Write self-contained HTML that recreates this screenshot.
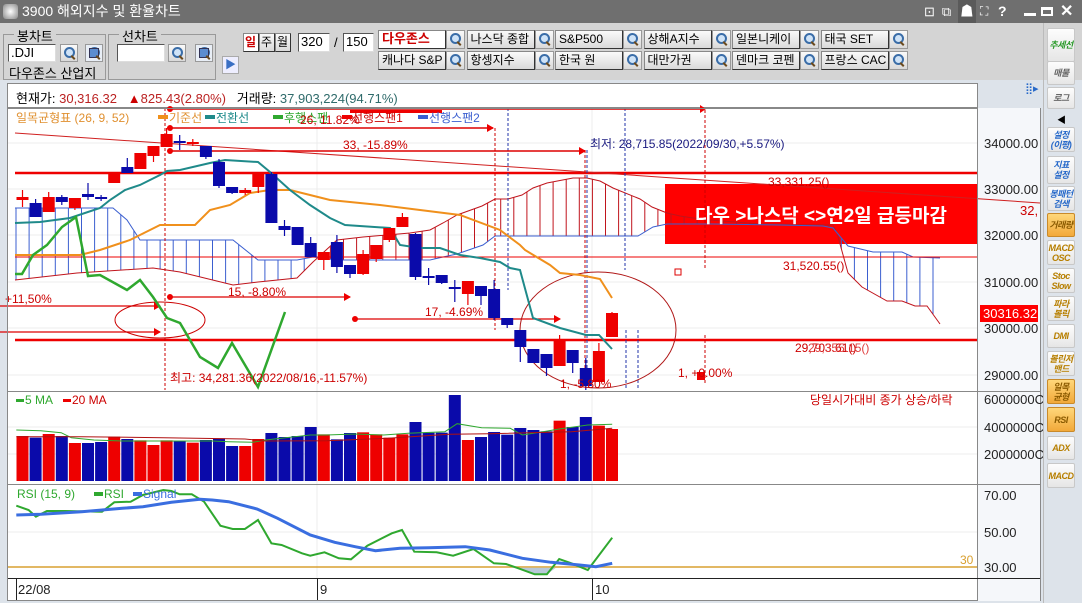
<!DOCTYPE html>
<html><head><meta charset="utf-8">
<style>
*{margin:0;padding:0;box-sizing:border-box}
body{width:1082px;height:603px;overflow:hidden;background:#dde3ea;font-family:"Liberation Sans","Noto Sans CJK KR",sans-serif;font-size:12px;position:relative}
.abs{position:absolute}
#title{left:0;top:0;width:1082px;height:23px;background:#6f6f6f;color:#fff;font-size:14px;line-height:23px}
#tb{left:0;top:23px;width:1082px;height:57px;background:#d4d4d4}
.grp{position:absolute;border:1px solid #999;border-top:none}
.grp span{position:absolute;top:-9px;left:10px;background:#d4d4d4;padding:0 3px;font-size:13px}
.inp{position:absolute;background:#fff;border:1px solid #555;border-right-color:#ddd;border-bottom-color:#ddd;font-size:13px;padding-left:2px;line-height:16px}
.btn{position:absolute;background:linear-gradient(#fafafa,#d9d9d9);border:1px solid #888;border-right-color:#333;border-bottom-color:#333;font-size:12px;line-height:16px;padding-left:3px;white-space:nowrap;overflow:hidden}
.srch{position:absolute;width:18px;height:18px;background:linear-gradient(#fafafa,#d9d9d9);border:1px solid #999}
.srch:before{content:"";position:absolute;left:3px;top:2px;width:7px;height:7px;border:2px solid #3a6da8;border-radius:50%;background:#cfe3f7}
.srch:after{content:"";position:absolute;left:11px;top:10px;width:2px;height:5px;background:#6b4a1d;transform:rotate(-45deg)}
.side{position:absolute;left:1047px;width:28px;background:linear-gradient(#fdfdfd,#e6e6e6);border:1px solid #c8c8c8;border-radius:2px;color:#2769c9;font-size:9px;font-weight:bold;font-style:italic;text-align:center;line-height:10px;display:flex;align-items:center;justify-content:center;letter-spacing:-0.5px;overflow:hidden}
.side.o{background:linear-gradient(#ffd77a,#f2a93a);color:#8a5a00;border-color:#c98a2a}
.side.g{color:#999}
</style></head><body>
<div id="title" class="abs"><span style="position:absolute;left:3px;top:4px;width:15px;height:15px;background:radial-gradient(#fff,#888);border-radius:3px"></span><span style="position:absolute;left:22px">3900 해외지수 및 환율차트</span>
<span style="position:absolute;left:924px;top:0;font-size:13px;letter-spacing:7px">⊡⧉</span>
<span style="position:absolute;left:958px;top:0;width:18px;height:23px;background:#5a5a5a;text-align:center">☗</span>
<span style="position:absolute;left:980px;font-size:12px">⛶</span>
<span style="position:absolute;left:998px;font-weight:bold">?</span>
<span style="position:absolute;left:1024px;top:13px;width:12px;height:3px;background:#fff"></span>
<span style="position:absolute;left:1041px;top:7px;width:12px;height:9px;border:2px solid #fff;border-top-width:3px"></span>
<span style="position:absolute;left:1060px;font-size:16px;font-weight:bold">✕</span>
</div>
<div id="tb" class="abs">
 <div class="grp" style="left:3px;top:11px;width:103px;height:46px;border-top:1px solid #999"><span>봉차트</span></div>
 <div class="inp" style="left:8px;top:21px;width:48px;height:18px">.DJI</div>
 <div class="srch" style="left:60px;top:21px"></div>
 <div class="srch" style="left:85px;top:21px;background:#e8eef6"><i style="position:absolute;left:3px;top:3px;width:10px;height:10px;background:#5b8dd0;border:1px solid #335"></i></div>
 <div class="abs" style="left:9px;top:40px;font-size:13px">다우존스 산업지</div>
 <div class="grp" style="left:108px;top:11px;width:108px;height:46px;border-top:1px solid #999"><span>선차트</span></div>
 <div class="inp" style="left:117px;top:21px;width:48px;height:18px"></div>
 <div class="srch" style="left:168px;top:21px"></div>
 <div class="srch" style="left:195px;top:21px;background:#e8eef6"><i style="position:absolute;left:3px;top:3px;width:10px;height:10px;background:#5b8dd0;border:1px solid #335"></i></div>
 <div class="abs" style="left:222px;top:33px;width:17px;height:18px;background:#eef;border:1px solid #aaa;color:#3a6fc4;font-size:11px;text-align:center;line-height:16px">▶</div>
 <div class="btn" style="left:243px;top:10px;width:16px;height:19px;color:#c00;font-weight:bold;background:#fff;padding-left:1px">일</div>
 <div class="btn" style="left:259px;top:10px;width:16px;height:19px;padding-left:1px">주</div>
 <div class="btn" style="left:275px;top:10px;width:16px;height:19px;padding-left:1px">월</div>
 <div class="inp" style="left:298px;top:10px;width:32px;height:19px">320</div>
 <div class="abs" style="left:334px;top:12px;font-size:13px">/</div>
 <div class="inp" style="left:343px;top:10px;width:31px;height:19px">150</div>
</div>
<div id="btns"></div>
<div class="abs" style="left:7px;top:83px;width:971px;height:25px;background:#fff;border:1px solid #888"></div>
<div class="abs" style="left:16px;top:88px;font-size:13px;white-space:nowrap">현재가: <span style="color:#b22">30,316.32</span>&nbsp;&nbsp;&nbsp;<span style="color:#c00">▲</span><span style="color:#b22">825.43(2.80%)</span>&nbsp;&nbsp;&nbsp;거래량: <span style="color:#2f6b6b">37,903,224(94.71%)</span></div>
<div class="abs" style="left:1025px;top:82px;color:#2769c9;font-size:11px">⣿▸</div>
<svg class="abs" id="ch" style="left:0;top:0" width="1082" height="603" xmlns="http://www.w3.org/2000/svg" font-family="Liberation Sans, Noto Sans CJK KR, sans-serif" font-size="12">
 <rect x="7" y="108" width="1033" height="493" fill="#fff"/>
 <rect x="978" y="108" width="62" height="493" fill="#f5f7fa"/>
 <g stroke="#ececec" stroke-width="1">
  <line x1="8" y1="143" x2="977" y2="143"/><line x1="8" y1="189" x2="977" y2="189"/><line x1="8" y1="235" x2="977" y2="235"/><line x1="8" y1="282" x2="977" y2="282"/><line x1="8" y1="328" x2="977" y2="328"/><line x1="8" y1="375" x2="977" y2="375"/>
  <line x1="8" y1="427" x2="977" y2="427"/><line x1="8" y1="454" x2="977" y2="454"/>
  <line x1="8" y1="532" x2="977" y2="532"/>
  <line x1="317" y1="108" x2="317" y2="578"/><line x1="592" y1="108" x2="592" y2="578"/>
 </g>
 <g id="dyn"></g>
 <g stroke="#888" fill="none">
  <rect x="7.5" y="108.5" width="970" height="492"/>
  <line x1="8" y1="391.5" x2="1040" y2="391.5"/><line x1="8" y1="484.5" x2="1040" y2="484.5"/>
  <line x1="8" y1="578.5" x2="1040" y2="578.5" stroke="#222"/>
  <line x1="1040.5" y1="108" x2="1040.5" y2="601"/>
 </g>
 <g stroke="#222"><line x1="16.5" y1="578" x2="16.5" y2="600"/><line x1="317.5" y1="578" x2="317.5" y2="600"/><line x1="592.5" y1="578" x2="592.5" y2="600"/></g>
 <g font-size="13" fill="#222"><text x="18" y="594">22/08</text><text x="320" y="594">9</text><text x="595" y="594">10</text></g>
 <g font-size="13" fill="#222">
  <text x="984" y="148">34000.00</text><text x="984" y="194">33000.00</text><text x="984" y="240">32000.00</text><text x="984" y="287">31000.00</text><text x="984" y="333">30000.00</text><text x="984" y="380">29000.00</text>
  <text x="984" y="404">6000000C</text><text x="984" y="432">4000000C</text><text x="984" y="459">2000000C</text>
  <text x="984" y="500">70.00</text><text x="984" y="537">50.00</text><text x="984" y="572">30.00</text>
 </g>
 <rect x="980" y="305" width="58" height="17" fill="#f00"/>
 <text x="983" y="318" font-size="13" fill="#fff">30316.32</text>
</svg>
<div class="side g" style="top:28px;height:34px;color:#2a9a2a">추세선</div>
<div class="side g" style="top:61px;height:24px;color:#666">매물</div>
<div class="side g" style="top:87px;height:22px;color:#666">로그</div>
<div class="abs" style="left:1057px;top:113px;font-size:9px">◀</div>
<div class="side" style="top:127px;height:25px">설정<br>(이평)</div>
<div class="side" style="top:156px;height:28px">지표<br>설정</div>
<div class="side" style="top:186px;height:25px">봉패턴<br>검색</div>
<div class="side o" style="top:213px;height:24px">거래량</div>
<div class="side" style="top:240px;height:25px;color:#b77f00">MACD<br>OSC</div>
<div class="side" style="top:268px;height:25px;color:#b77f00">Stoc<br>Slow</div>
<div class="side" style="top:296px;height:25px;color:#b77f00">파라<br>볼릭</div>
<div class="side" style="top:324px;height:24px;color:#b77f00">DMI</div>
<div class="side" style="top:351px;height:25px;color:#b77f00">볼린저<br>밴드</div>
<div class="side o" style="top:379px;height:25px">일목<br>균형</div>
<div class="side o" style="top:407px;height:25px">RSI</div>
<div class="side" style="top:436px;height:24px;color:#b77f00">ADX</div>
<div class="side" style="top:463px;height:25px;color:#b77f00">MACD</div>
<div class="abs" style="left:1043px;top:23px;width:1px;height:580px;background:#bbb"></div>
<script>
(function(){
var B=document.getElementById('btns'),h='';
var names=[['다우존스','캐나다 S&P'],['나스닥 종합','항셍지수'],['S&P500','한국 원'],['상해A지수','대만가권'],['일본니케이','덴마크 코펜'],['태국 SET','프랑스 CAC']];
for(var i=0;i<6;i++){var x=378+88.5*i;for(var r=0;r<2;r++){var y=30+r*21;
h+='<div class="btn" style="left:'+x+'px;top:'+y+'px;width:68px;height:19px;'+(i==0&&r==0?'color:#c00;font-weight:bold;background:#fff;font-size:13px;':'')+'">'+names[i][r]+'</div><div class="srch" style="left:'+(x+68)+'px;top:'+y+'px;width:19px;height:19px"></div>';}}
B.innerHTML=h;
var g=document.getElementById('dyn'),s='';
function L(x1,y1,x2,y2,c,w,d){s+='<line x1="'+x1+'" y1="'+y1+'" x2="'+x2+'" y2="'+y2+'" stroke="'+c+'" stroke-width="'+(w||1)+'"'+(d?' stroke-dasharray="'+d+'"':'')+'/>';}
function P(pts,c,w,f){s+='<polyline points="'+pts.map(function(p){return p.join(',')}).join(' ')+'" fill="'+(f||'none')+'" stroke="'+c+'" stroke-width="'+(w||1)+'"/>';}
function T(x,y,t,c,fs,extra){s+='<text x="'+x+'" y="'+y+'" fill="'+c+'" font-size="'+(fs||12)+'" '+(extra||'')+'>'+t+'</text>';}
function interp(a,x){for(var i=0;i<a.length-1;i++){if(x>=a[i][0]&&x<=a[i+1][0]){var t=(x-a[i][0])/(a[i+1][0]-a[i][0]);return a[i][1]+t*(a[i+1][1]-a[i][1]);}}return null;}
s+='<rect x="665" y="184" width="313" height="60" fill="#f00"/>';
var s1=[[15,280],[77,273],[153,268],[180,272],[233,285],[258,282],[297,278],[313,262],[337,240],[363,237],[410,233],[430,230],[443,223],[457,215],[482,206],[495,199],[508,199],[522,195],[533,188],[547,183],[573,178],[587,178],[600,181],[613,188],[640,199],[652,207],[667,213],[680,216],[693,218],[710,220],[760,224],[833,225],[837,233],[848,273],[862,287],[887,301],[902,301],[915,306],[927,306],[940,324]];
var s2=[[15,208],[113,208],[127,220],[140,240],[233,240],[258,260],[297,260],[313,257],[337,260],[430,260],[443,257],[457,254],[483,245],[495,236],[638,236],[653,227],[667,224],[713,224],[780,225],[823,226],[833,228],[848,246],[873,252],[902,252],[913,257],[940,258]];
for(var x=16;x<=940;x+=13.1){var a=interp(s1,x),b=interp(s2,x);if(a==null||b==null)continue;L(x.toFixed(1),a,x.toFixed(1),b,a<b?'#c0141c':'#3b5fd0',1);}
P(s1,'#c0141c',1);P(s2,'#3b5fd0',1);
L(15,173,977,173,'#e00',2.5);L(15,257,977,257,'#e00',1);L(15,340,977,340,'#e00',2.5);
L(15,133,1040,203,'#d02020',1);
L(165,108,165,390,'#c00',1,'3,2');L(495,128,495,330,'#c00',1,'3,2');L(585,150,585,385,'#c00',1,'3,2');L(705,110,705,270,'#c00',1,'3,2');L(705,335,705,383,'#c00',1,'3,2');
L(508,108,508,290,'#2233aa',1,'3,2');L(587,150,587,385,'#2233aa',1,'3,2');L(625,108,625,270,'#2233aa',1,'3,2');L(626,330,626,388,'#2233aa',1,'3,2');L(638,330,638,388,'#2233aa',1,'3,2');
L(170,109,700,109,'#d00',1.5);s+='<polygon points="700,105 706,109 700,113" fill="#e00"/>';s+='<rect x="350" y="110" width="92" height="3" fill="#e00"/>';
L(170,128,493,128,'#d00',1.5);s+='<polygon points="487,124 494,128 487,132" fill="#e00"/>';
L(170,151,585,151,'#d00',1.5);s+='<polygon points="579,147 586,151 579,155" fill="#e00"/>';
L(170,297,350,297,'#d00',1.2);L(355,319,560,319,'#d00',1.2);s+='<polygon points="554,315 561,319 554,323" fill="#e00"/><polygon points="344,293 351,297 344,301" fill="#e00"/>';
L(0,306,160,306,'#d00',1.2);L(0,332,160,332,'#d00',1.2);s+='<polygon points="154,302 161,306 154,310" fill="#e00"/><polygon points="154,328 161,332 154,336" fill="#e00"/>';
[[170,109],[170,128],[170,151],[170,297],[355,319]].forEach(function(p){s+='<circle cx="'+p[0]+'" cy="'+p[1]+'" r="3" fill="#e00"/>';});
s+='<ellipse cx="160" cy="320" rx="45" ry="18" fill="none" stroke="#c00"/>';
s+='<ellipse cx="598" cy="330" rx="78" ry="58" fill="none" stroke="#b01818"/>';
s+='<rect x="675" y="269" width="6" height="6" fill="none" stroke="#d00"/><rect x="697" y="372" width="8" height="8" fill="#e00"/>';
P([[15,255],[80,255],[100,250],[115,245],[130,240],[160,225],[195,225],[210,210],[230,205],[250,193],[270,190],[290,190],[310,195],[330,200],[380,205],[420,210],[460,215],[500,230],[520,245],[525,250],[550,265],[560,273],[580,275],[600,279],[612,298]],'#f0901c',2);
P([[15,223],[40,222],[70,218],[100,208],[110,200],[125,190],[140,185],[160,175],[167,171],[180,170],[210,163],[225,160],[258,162],[270,172],[290,190],[310,205],[330,218],[345,225],[390,228],[400,245],[420,248],[440,248],[460,255],[480,258],[500,262],[510,268],[520,270],[533,318],[560,328],[586,335],[599,335],[612,349]],'#1f8a8a',2);
P([[15,274],[22,274],[33,255],[47,245],[62,227],[76,217],[88,276],[100,275],[127,290],[140,280],[153,297],[167,318],[180,323],[200,357],[218,368],[232,343],[258,387],[285,312]],'#2fa82f',2.5);
var C=[['r',197,200,190,207],['b',203,217,199,217],['r',197,212,192,212],['b',197,202,195,205],['r',198,208,198,210],['b',194,197,183,200],['b',197,199,195,201],['r',174,183,172,183],['b',167,173,158,173],['r',153,169,153,169],['r',146,156,146,162],['r',134,147,128,147],['b',141,143,135,150],['r',142,143,139,146],['b',146,157,146,159],['b',162,186,159,188],['b',187,193,187,194],['r',190,193,188,195],['r',174,187,174,193],['b',174,223,172,223],['b',226,230,220,236],['b',227,245,227,245],['b',243,257,237,257],['r',252,260,252,270],['b',242,267,235,273],['b',265,274,265,278],['r',254,274,250,275],['r',245,259,245,262],['r',228,240,228,242],['r',217,227,213,227],['b',234,277,233,280],['b',276,277,268,285],['b',275,283,275,284],['b',287,289,280,302],['r',281,294,281,305],['b',286,296,286,305],['b',289,318,280,320],['b',318,325,318,328],['b',330,347,330,362],['b',349,363,349,363],['b',354,368,354,376],['r',340,366,335,366],['b',350,363,350,373],['b',368,386,358,390],['r',351,382,343,382],['r',313,337,312,337]];
var V=[['r',153],['b',158],['r',147],['b',153],['r',174],['b',174],['b',171],['r',155],['b',162],['r',166],['r',180],['r',166],['b',168],['r',173],['b',165],['b',160],['b',183],['r',183],['r',162],['b',144],['b',156],['b',153],['b',126],['r',148],['b',163],['b',144],['r',142],['r',148],['r',158],['r',148],['b',111],['b',143],['b',143],['b',30],['r',165],['b',156],['b',141],['b',149],['b',129],['b',135],['b',139],['r',107],['b',126],['b',96],['r',122],['r',132]];
for(var i=0;i<C.length;i++){var cx=22.5+13.1*i,c=C[i],col=c[0]=='r'?'#e00':'#0a0aaa';
L(cx,c[3],cx,c[4],col,1.2);s+='<rect x="'+(cx-6)+'" y="'+c[1]+'" width="12" height="'+Math.max(2,c[2]-c[1])+'" fill="'+col+'"/>';
var v=V[i],vt=385+v[1]/3;s+='<rect x="'+(cx-6)+'" y="'+vt+'" width="12" height="'+(481-vt)+'" fill="'+(v[0]=='r'?'#e00':'#0a0aaa')+'"/>';}
function Z(a){return a.map(function(p){return [(p[0]/2.45).toFixed(1),(385+p[1]/3).toFixed(1)];});}
P(Z([[40,135],[100,137],[150,143],[175,158],[230,165],[300,168],[400,168],[520,168],[560,170],[620,172],[650,165],[700,158],[760,150],[800,150],[870,147],[940,150],[1000,145],[1090,140],[1120,116],[1180,128],[1250,130],[1280,150],[1330,140],[1370,132],[1440,120],[1500,118]]),'#2fa82f',1);
P(Z([[40,155],[200,155],[400,158],[600,162],[650,168],[800,167],[950,160],[1100,148],[1200,146],[1400,140],[1500,130]]),'#b01010',1);
L(8,567,977,567,'#d9a030',1.5);
s+='<polygon points="'+Z([[1250,548],[1270,550],[1310,568],[1340,568],[1362,548]]).map(function(p){return p.join(',')}).join(' ')+'" fill="#b8c8d8"/>';
P(Z([[40,362],[70,375],[88,395],[115,378],[160,378],[250,380],[280,352],[320,350],[350,330],[400,315],[420,318],[440,328],[470,328],[500,350],[540,422],[570,432],[600,432],[632,405],[665,475],[690,480],[740,505],[760,512],[795,502],[830,520],[860,523],[900,482],[960,445],[985,435],[1015,500],[1070,502],[1110,512],[1160,492],[1210,535],[1240,537],[1270,550],[1310,568],[1340,568],[1370,522],[1400,535],[1440,555],[1500,458]]),'#2fa82f',2);
P(Z([[40,390],[100,388],[200,380],[300,370],[350,365],[420,352],[490,343],[520,345],[560,350],[630,372],[680,400],[760,450],[820,472],[870,485],[920,497],[980,490],[1050,488],[1140,485],[1200,495],[1280,520],[1350,532],[1420,540],[1460,545],[1500,535]]),'#3a6ee0',3);
T(16,122,'일목균형표 (26, 9, 52)','#e09030',12);
s+='<rect x="158" y="115" width="10" height="4" fill="#f0901c"/>';T(169,122,'기준선','#e09030');
s+='<rect x="205" y="115" width="10" height="4" fill="#1f8a8a"/>';T(216,122,'전환선','#1f8a8a');
s+='<rect x="273" y="115" width="10" height="4" fill="#2fa82f"/>';T(284,122,'후행스팬','#2fa82f');
T(300,124,'26, 11.82%','#c00');
s+='<rect x="342" y="115" width="10" height="4" fill="#e00"/>';T(352,122,'선행스팬1','#c00');
s+='<rect x="418" y="115" width="10" height="4" fill="#3b5fd0"/>';T(429,122,'선행스팬2','#3b5fd0');
T(343,149,'33, -15.89%','#c00');
T(590,148,'최저: 28,715.85(2022/09/30,+5.57%)','#1a1a80');
T(768,186,'33,331.25()','#c00');
s+='<text x="821" y="222" fill="#fff" font-size="19" font-weight="bold" text-anchor="middle">다우 &gt;나스닥 &lt;&gt;연2일 급등마감</text>';
T(1020,215,'32,','#c00',13);
T(783,270,'31,520.55()','#c00');
T(795,352,'29,703.61()','#c00');T(808,352,'29,355.15()','#e04040');
T(678,377,'1, +0.00%','#c00');
T(5,303,'+11,50%','#c00');
T(228,296,'15, -8.80%','#c00');
T(425,316,'17, -4.69%','#c00');
T(170,382,'최고: 34,281.36(2022/08/16,-11.57%)','#c00');
T(560,388,'1, -5.80%','#c00');
s+='<rect x="16" y="399" width="8" height="3" fill="#2fa82f"/>';T(25,404,'5 MA','#2fa82f');
s+='<rect x="63" y="399" width="8" height="3" fill="#e00"/>';T(72,404,'20 MA','#c00');
T(810,404,'당일시가대비 종가 상승/하락','#c00');
T(17,498,'RSI (15, 9)','#2fa82f');s+='<rect x="94" y="492" width="9" height="4" fill="#2fa82f"/>';T(104,498,'RSI','#2fa82f');s+='<rect x="133" y="492" width="9" height="4" fill="#3a6ee0"/>';T(143,498,'Signal','#3a6ee0');
T(960,564,'30','#d9a030');
g.innerHTML=s;
})();
</script>
</body></html>
